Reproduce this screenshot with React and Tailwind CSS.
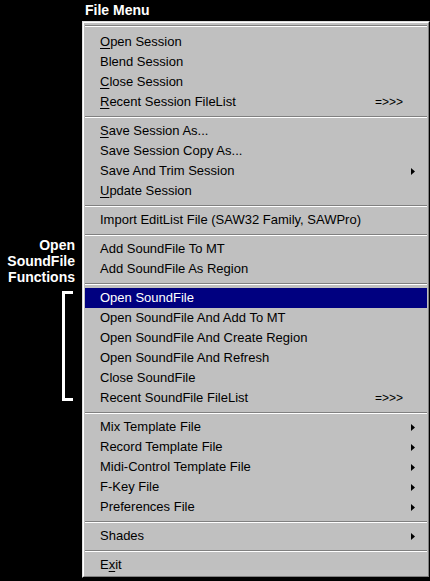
const items = [
  { t: "Open Session", u: 0 },
  { t: "Blend Session" },
  { t: "Close Session", u: 0 },
  { t: "Recent Session FileList", u: 0, more: true },
  "sep",
  { t: "Save Session As...", u: 0 },
  { t: "Save Session Copy As..." },
  { t: "Save And Trim Session", sub: true },
  { t: "Update Session", u: 0 },
  "sep",
  { t: "Import EditList File (SAW32 Family, SAWPro)" },
  "sep",
  { t: "Add SoundFile To MT" },
  { t: "Add SoundFile As Region" },
  "sep",
  { t: "Open SoundFile", active: true },
  { t: "Open SoundFile And Add To MT" },
  { t: "Open SoundFile And Create Region" },
  { t: "Open SoundFile And Refresh" },
  { t: "Close SoundFile" },
  { t: "Recent SoundFile FileList", more: true },
  "sep",
  { t: "Mix Template File", sub: true },
  { t: "Record Template File", sub: true },
  { t: "Midi-Control Template File", sub: true },
  { t: "F-Key File", sub: true },
  { t: "Preferences File", sub: true },
  "sep",
  { t: "Shades", sub: true },
  "sep",
  { t: "Exit", u: 1 },
];

const Sep = () => (
  <div className="pt-[4px] pb-[3px]">
    <div className="h-px bg-[#808080]" />
    <div className="h-px bg-white" />
  </div>
);

const Label = ({ t, u }) => {
  if (u === undefined) return <span>{t}</span>;
  return (
    <span>
      {t.slice(0, u)}
      <span className="underline underline-offset-2">{t[u]}</span>
      {t.slice(u + 1)}
    </span>
  );
};

const Row = ({ item }) => (
  <div
    className={`h-[20px] flex items-center pl-[15px] pr-[8px] ${
      item.active ? "bg-[#000080] text-white" : "text-black"
    }`}
  >
    <div className="flex-1 whitespace-nowrap">
      <Label t={item.t} u={item.u} />
    </div>
    {item.more && <span className="mr-[16px] text-[12px]">=&gt;&gt;&gt;</span>}
    {item.sub && (
      <svg width="4" height="7" viewBox="0 0 4 7" className="mr-[4px]">
        <path d="M0 0 L4 3.5 L0 7 Z" fill="currentColor" />
      </svg>
    )}
  </div>
);

export default function App() {
  return (
    <div
      className="w-[430px] h-[581px] bg-black flex overflow-hidden"
      style={{ fontFamily: '"Liberation Sans", Arial, sans-serif' }}
    >
      <div className="w-[82px] shrink-0 flex flex-col items-end pr-[7px] pt-[237px]">
        <div className="text-white font-bold text-[14px] leading-[16px] text-right">
          <div>Open</div>
          <div>SoundFile</div>
          <div>Functions</div>
        </div>
        <div className="mt-[6px] mr-[2px] w-[11px] h-[110px] border-l-[3px] border-t-[3px] border-b-[3px] border-white" />
      </div>

      <div className="flex flex-col">
        <div className="h-[21px] pl-[3px] flex items-center text-white font-bold text-[14px]">
          File Menu
        </div>
        <div className="bg-[#c0c0c0] border border-[#dfdfdf] border-r-black border-b-black">
          <div className="border border-white border-r-[#808080] border-b-[#808080] p-px">
            <div className="w-[342px] text-[13px]">
              <div className="pt-px pb-[5px]">
                <div className="h-px bg-[#808080]" />
                <div className="h-px bg-white" />
              </div>
              {items.map((it, i) =>
                it === "sep" ? <Sep key={i} /> : <Row key={i} item={it} />
              )}
            </div>
          </div>
        </div>
      </div>
    </div>
  );
}
